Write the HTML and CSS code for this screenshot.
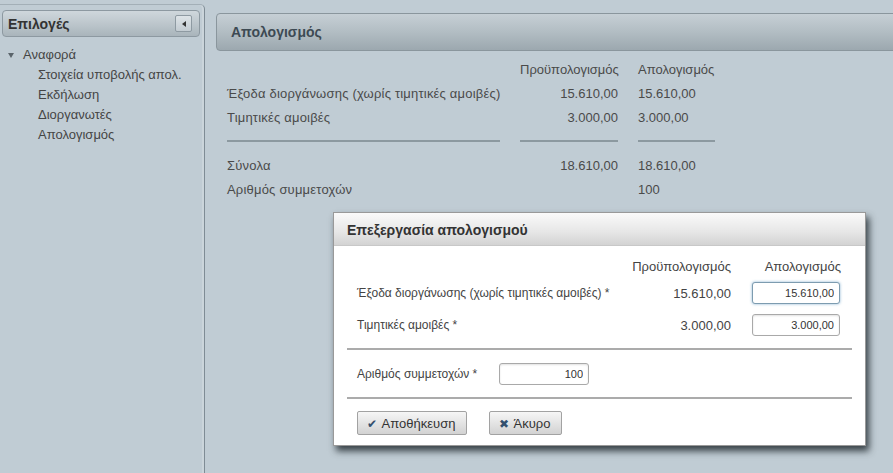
FILE: index.html
```html
<!DOCTYPE html>
<html lang="el">
<head>
    <meta charset="UTF-8">
    <title>Απολογισμός</title>
    <link rel="stylesheet" href="styles.css">
</head>
<body>
    <div class="layout">
        <aside class="sidebar">
            <div class="side-head">
                <span>Επιλογές</span>
                <span class="collapse"><span class="arrow-left"></span></span>
            </div>
            <ul class="tree">
                <li><span class="caret"></span>Αναφορά</li>
                <li class="leaf">Στοιχεία υποβολής απολ.</li>
                <li class="leaf">Εκδήλωση</li>
                <li class="leaf">Διοργανωτές</li>
                <li class="leaf">Απολογισμός</li>
            </ul>
        </aside>

        <main class="content">
            <div class="panel-head">Απολογισμός</div>

            <div class="summary">
                <div></div>
                <div class="num">Προϋπολογισμός</div>
                <div>Απολογισμός</div>

                <div class="label">Έξοδα διοργάνωσης (χωρίς τιμητικές αμοιβές)</div>
                <div class="num">15.610,00</div>
                <div>15.610,00</div>

                <div class="label">Τιμητικές αμοιβές</div>
                <div class="num">3.000,00</div>
                <div>3.000,00</div>

                <div class="rule"></div>
                <div class="rule"></div>
                <div class="rule"></div>

                <div class="label">Σύνολα</div>
                <div class="num">18.610,00</div>
                <div>18.610,00</div>

                <div class="label">Αριθμός συμμετοχών</div>
                <div class="num"></div>
                <div>100</div>
            </div>
        </main>
    </div>

    <div class="dialog">
        <div class="dialog-head">Επεξεργασία απολογισμού</div>
        <div class="dialog-body">
            <div class="edit-grid">
                <div></div>
                <div class="num">Προϋπολογισμός</div>
                <div class="num col-head">Απολογισμός</div>

                <div class="label">Έξοδα διοργάνωσης (χωρίς τιμητικές αμοιβές) *</div>
                <div class="num">15.610,00</div>
                <div><input type="text" class="field focused" value="15.610,00"></div>

                <div class="label">Τιμητικές αμοιβές *</div>
                <div class="num">3.000,00</div>
                <div><input type="text" class="field" value="3.000,00"></div>
            </div>

            <div class="separator"></div>

            <div class="count-row">
                <label class="label count-label">Αριθμός συμμετοχών *</label>
                <input type="text" class="field count" value="100">
            </div>

            <div class="separator"></div>

            <div class="actions">
                <button class="btn save"><span class="icon">✔</span>Αποθήκευση</button>
                <button class="btn cancel"><span class="icon">✖</span>Άκυρο</button>
            </div>
        </div>
    </div>
</body>
</html>
```

FILE: styles.css
```css
html, body {
    margin: 0;
    padding: 0;
    height: 100%;
    overflow: hidden;
}

body {
    font-family: "Liberation Sans", Arial, sans-serif;
    font-size: 13px;
    color: #4a4a4a;
    background-color: #c0ccd4;
}

.layout {
    display: flex;
    height: 100%;
}

/* barra lateral */
.sidebar {
    width: 206px;
    margin-top: 4px;
    margin-left: -1px;
    border-top: 1px solid #a3afb7;
    border-right: 1px solid #7f8c95;
    border-top-right-radius: 5px;
    box-shadow: inset -2px 0 0 #cbd5db;
    box-sizing: border-box;
    flex-shrink: 0;
}

.side-head {
    display: flex;
    align-items: center;
    justify-content: space-between;
    height: 27px;
    margin: 5px 4px 0 3px;
    padding: 0 7px 0 5px;
    border: 1px solid #8d99a1;
    border-radius: 4px;
    background: linear-gradient(#cfd7dc, #b9c3c9 60%, #a9b4bb);
    box-sizing: border-box;
    font-size: 14px;
    font-weight: bold;
    color: #333;
}

.collapse {
    display: flex;
    align-items: center;
    justify-content: center;
    width: 15px;
    height: 15px;
    border: 1px solid #8e9aa2;
    border-radius: 2px;
    background: linear-gradient(#dde3e7, #c3ccd2);
}

.arrow-left {
    width: 0;
    height: 0;
    border-top: 3px solid transparent;
    border-bottom: 3px solid transparent;
    border-right: 4px solid #333;
}

.tree {
    list-style: none;
    margin: 8px 0 0 0;
    padding: 0;
    color: #454545;
}

.tree li {
    height: 20px;
    line-height: 20px;
    padding-left: 24px;
    position: relative;
}

.tree li.leaf {
    padding-left: 39px;
}

.caret {
    position: absolute;
    left: 9px;
    top: 8px;
    width: 0;
    height: 0;
    border-left: 3px solid transparent;
    border-right: 3px solid transparent;
    border-top: 5px solid #5a646b;
}

/* conteúdo */
.content {
    flex: 1;
    padding: 13px 0 0 11px;
    margin-right: -10px;
}

.panel-head {
    height: 38px;
    line-height: 36px;
    padding-left: 14px;
    border: 1px solid #8a969d;
    border-radius: 4px;
    background: linear-gradient(#c6cfd5, #b2bdc3 50%, #9ca8af);
    box-sizing: border-box;
    font-size: 14px;
    font-weight: bold;
    color: #3d4a53;
}

.summary {
    display: grid;
    grid-template-columns: 273px 98px 77px;
    column-gap: 20px;
    grid-auto-rows: 24px;
    line-height: 24px;
    margin: 7px 0 0 11px;
    white-space: nowrap;
}

.summary .label {
    letter-spacing: 0.2px;
}

.summary .num {
    text-align: right;
}

.summary .rule {
    height: 2px;
    margin: 10px 0;
    background-color: #8c99a0;
}

/* diálogo */
.dialog {
    position: absolute;
    left: 333px;
    top: 212px;
    width: 533px;
    height: 234px;
    border: 1px solid #999;
    background: white;
    box-sizing: border-box;
    box-shadow: 3px 5px 7px rgba(30, 40, 45, 0.85);
}

.dialog-head {
    height: 33px;
    line-height: 34px;
    padding-left: 13px;
    border-bottom: 1px solid #c8c8c8;
    background: linear-gradient(#fafafa, #e6e6e6 60%, #d3d3d3);
    box-sizing: border-box;
    font-size: 14px;
    font-weight: bold;
    color: #333;
}

.dialog-body {
    padding: 9px 13px 0 13px;
    color: #444;
}

.dialog-body .label {
    font-size: 12px;
}

.edit-grid {
    display: grid;
    grid-template-columns: 253px 100px 88px;
    column-gap: 21px;
    grid-template-rows: 22px 32px 32px;
    align-items: center;
    padding: 0 11px 0 10px;
    white-space: nowrap;
}

.edit-grid .num {
    text-align: right;
}

.col-head {
    margin-right: -1px;
}

.field {
    width: 88px;
    height: 22px;
    padding: 0 5px;
    border: 1px solid #a9a9a9;
    border-radius: 3px;
    box-shadow: inset 0 1px 2px rgba(0,0,0,0.12);
    box-sizing: border-box;
    font-family: "Liberation Sans", Arial, sans-serif;
    font-size: 11px;
    color: #333;
    text-align: right;
    outline: none;
}

.field.focused {
    border-color: #7d9cb0;
    box-shadow: 0 0 3px rgba(110, 160, 200, 0.8);
}

.separator {
    height: 2px;
    margin-top: 7px;
    background-color: #ababab;
}

.count-row {
    display: flex;
    align-items: center;
    height: 32px;
    margin-top: 8px;
    padding-left: 10px;
}

.count-label {
    width: 142px;
}

.field.count {
    width: 90px;
}

.actions {
    display: flex;
    gap: 22px;
    margin-top: 12px;
    padding-left: 10px;
}

.btn {
    height: 24px;
    padding: 0 10px 0 8px;
    border: 1px solid #a2a2a2;
    border-radius: 2px;
    background: linear-gradient(#f6f6f6, #e4e4e4 50%, #d2d2d2);
    font-family: "Liberation Sans", Arial, sans-serif;
    font-size: 13px;
    color: #333;
    cursor: pointer;
}

.btn.save {
    width: 110px;
}

.btn.cancel {
    width: 73px;
}

.btn .icon {
    margin-right: 5px;
    color: #33506e;
    font-size: 12px;
}
```
